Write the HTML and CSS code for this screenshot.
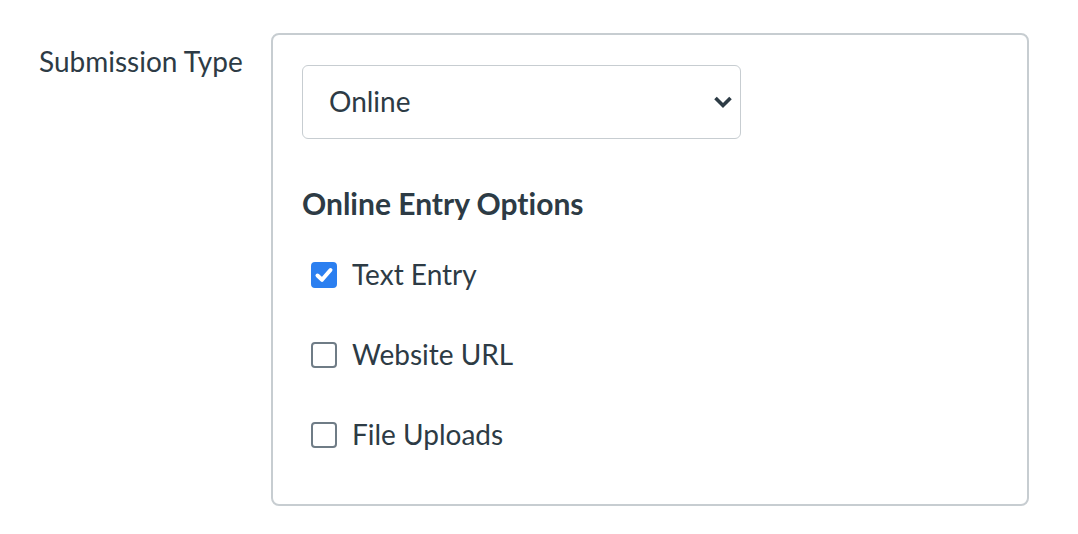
FILE: index.html
```html
<!DOCTYPE html>
<html>
<head>
<meta charset="utf-8">
<link rel="stylesheet" href="styles.css">
</head>
<body>
<div class="row">
  <div class="label">Submission Type</div>
  <div class="box">
    <div class="select">
      <span class="select-text">Online</span>
      <svg class="chev" width="20" height="14" viewBox="0 0 20 14"><path d="M2.5 3 L10 10.5 L17.5 3" fill="none" stroke="#2d3b45" stroke-width="3.6" stroke-linecap="butt" stroke-linejoin="miter"/></svg>
    </div>
    <div class="legend">Online Entry Options</div>
    <div class="opt">
      <span class="cb checked"><svg width="26" height="26" viewBox="0 0 26 26"><path d="M6.5 13.5 L11 17.8 L19.5 8" fill="none" stroke="#fff" stroke-width="4" stroke-linecap="round" stroke-linejoin="round"/></svg></span>
      <span class="opt-text">Text Entry</span>
    </div>
    <div class="opt">
      <span class="cb"></span>
      <span class="opt-text">Website URL</span>
    </div>
    <div class="opt">
      <span class="cb"></span>
      <span class="opt-text">File Uploads</span>
    </div>
  </div>
</div>
</body>
</html>
```
FILE: styles.css
```css
html, body {
  margin: 0;
  padding: 0;
  background: #fff;
}
body {
  font-family: Lato, "Liberation Sans", sans-serif;
  color: #2d3b45;
  font-variant-ligatures: none;
}
.row {
  display: flex;
  align-items: flex-start;
  padding-top: 33px;
}
.label {
  width: 232px;
  padding-left: 39px;
  font-size: 28px;
  line-height: 34px;
  margin-top: 11px;
}
.box {
  width: 696px;
  border: 2px solid #c7cdd1;
  border-radius: 8px;
  padding: 30px 29px 29px 29px;
}
.select {
  height: 72px;
  border: 1px solid #c7cdd1;
  border-radius: 6px;
  display: flex;
  align-items: center;
  justify-content: space-between;
  padding: 0 7px 0 26px;
  box-sizing: content-box;
  width: 404px;
}
.select-text {
  font-size: 28px;
  line-height: 34px;
  padding-bottom: 2px;
}
.chev {
  display: block;
}
.legend {
  margin-top: 47px;
  font-size: 30px;
  font-weight: bold;
  line-height: 34px;
  margin-bottom: 15px;
}
.opt {
  height: 80px;
  display: flex;
  align-items: center;
  padding-left: 9px;
}
.cb {
  width: 26px;
  height: 26px;
  box-sizing: border-box;
  border: 2px solid #6f7c86;
  border-radius: 4px;
  margin-right: 15px;
  display: flex;
  align-items: center;
  justify-content: center;
}
.cb.checked {
  background: #2b7ff0;
  border-color: #2b7ff0;
}
.cb svg {
  display: block;
  flex: none;
}
.opt-text {
  font-size: 28px;
  line-height: 34px;
  padding-bottom: 2px;
}
```
